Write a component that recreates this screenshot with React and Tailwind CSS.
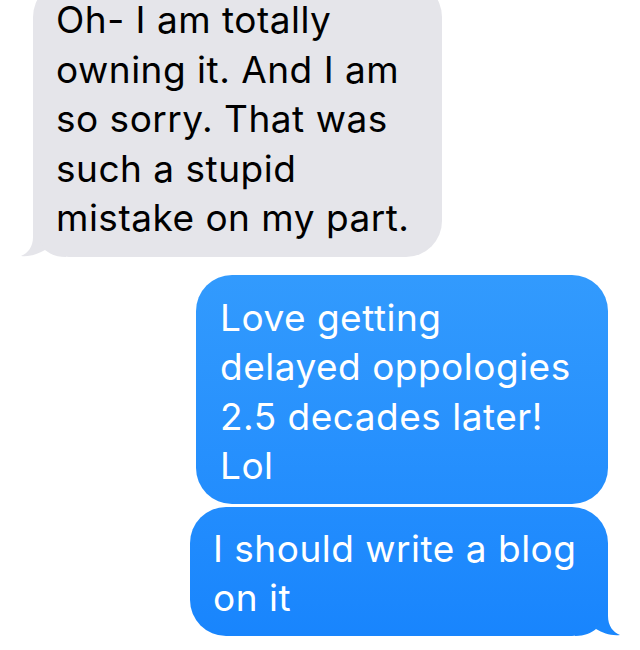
const Tail = ({ color, flip = false }) => (
  <svg
    width="50"
    height="40"
    viewBox="0 0 50 40"
    className={`absolute bottom-0 ${flip ? "-right-[14px] scale-x-[-1]" : "-left-[14px]"}`}
  >
    <path d="M14,2 L14,20 C14,30 9,36 2,39 C11,40 19,37 26,33 C31,37 37,40 47,40 L47,2 Z" fill={color} />
  </svg>
)

export default function App() {
  return (
    <div className="w-[640px] h-[650px] overflow-hidden bg-white font-['Inter','Helvetica',sans-serif] text-[37px] leading-[49.5px] tracking-[0.5px]">
      {/* received */}
      <div className="-mt-[19px] ml-[33px] w-[409px] relative">
        <Tail color="#e5e5ea" />
        <div className="relative bg-[#e5e5ea] text-black rounded-[36px] pl-[23px] pt-[14px] pb-[14px]">
          Oh- I am totally
          <br />
          owning it. And I am
          <br />
          so sorry. That was
          <br />
          such a stupid
          <br />
          mistake on my part.
        </div>
      </div>

      {/* sent */}
      <div className="mt-[18px] flex flex-col items-end gap-[3px] pr-[32px]">
        <div className="w-[412px] bg-fixed bg-linear-to-b from-[#44aafd] to-[#1784fd] text-white rounded-[36px] pl-[24px] pt-[18px] pb-[13px]">
          Love getting
          <br />
          delayed oppologies
          <br />
          2.5 decades later!
          <br />
          Lol
        </div>
        <div className="relative w-[418px]">
          <Tail color="#1a87fd" flip />
          <div className="relative bg-fixed bg-linear-to-b from-[#44aafd] to-[#1784fd] text-white rounded-[36px] pl-[23px] pt-[17px] pb-[13px]">
            I should write a blog
            <br />
            on it
          </div>
        </div>
      </div>
    </div>
  )
}
